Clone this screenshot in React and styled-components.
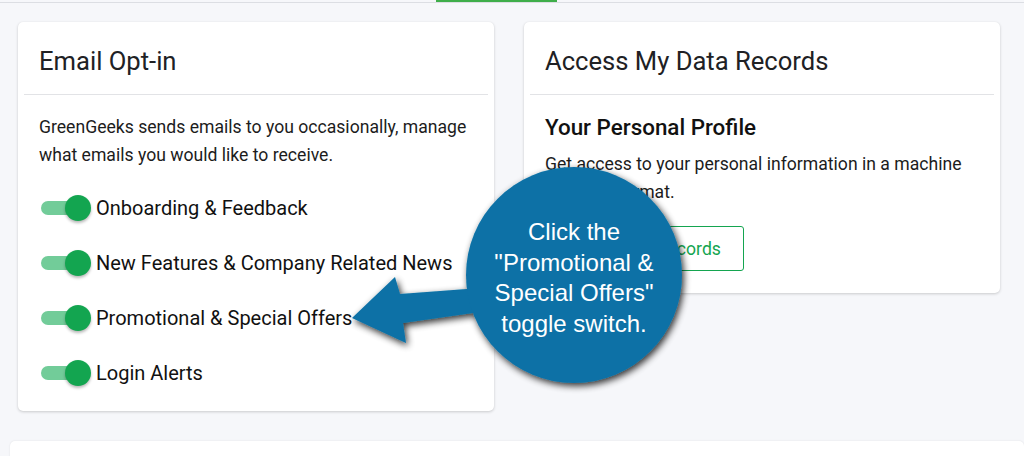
import styled, { createGlobalStyle } from "styled-components";

const GlobalStyle = createGlobalStyle`
    body {
        margin: 0;
        background: #f6f7fa;
        font-family: Roboto, "Noto Sans", sans-serif;
        color: #1c1c1c;
    }
`;

const Page = styled.div`
    position: relative;
    width: 1024px;
    height: 456px;
    overflow: hidden;
`;

const TabLine = styled.div`
    display: flex;
    height: 2px;
    border-bottom: 1px solid #dcdee3;
`;

const TabIndicator = styled.div`
    margin-left: 436px;
    width: 121px;
    height: 2px;
    background: #3fae4a;
`;

const Grid = styled.div`
    display: flex;
    align-items: flex-start;
    gap: 30px;
    padding: 19px 18px 0;
`;

const Card = styled.div`
    width: 476px;
    background: #fff;
    border-radius: 5px;
    box-shadow: 0 1px 3px rgba(0, 0, 0, 0.18), 0 0 1px rgba(0, 0, 0, 0.06);
    padding-bottom: ${(p) => p.$bottom || 0}px;
`;

const CardHeader = styled.div`
    margin: 0 6px;
    height: 73px;
    box-sizing: border-box;
    display: flex;
    align-items: center;
    padding: 6px 15px 0;
    border-bottom: 1px solid #e2e3e6;
`;

const CardTitle = styled.h2`
    margin: 0;
    font-size: 25.6px;
    font-weight: 400;
    color: #202124;
`;

const CardBody = styled.div`
    padding: 18px 21px 0;
`;

const Text = styled.p`
    margin: 0;
    font-size: 17.6px;
    line-height: 28px;
    color: #1c1c1c;
`;

const ToggleList = styled.div`
    display: flex;
    flex-direction: column;
    gap: 15px;
    margin-top: 19px;
`;

const ToggleRow = styled.label`
    display: flex;
    align-items: center;
    height: 40px;
    gap: 5px;
    font-size: 20px;
    color: #111;
`;

const Switch = styled.span`
    position: relative;
    width: 50px;
    height: 24px;
    margin-left: 2px;
    display: flex;
    align-items: center;

    &::before {
        content: "";
        width: 46px;
        height: 14px;
        border-radius: 7px;
        background: #72cc99;
    }

    &::after {
        content: "";
        position: absolute;
        right: 0;
        top: -1px;
        width: 26px;
        height: 26px;
        border-radius: 50%;
        background: #13a550;
        box-shadow: 0 2px 3px rgba(0, 0, 0, 0.28);
    }
`;

const SubTitle = styled.h3`
    margin: 0 0 9px;
    font-size: 22.4px;
    font-weight: 500;
    line-height: 28px;
    color: #111;
`;

const OutlineButton = styled.button`
    margin-top: 20px;
    height: 45px;
    padding: 0 22px 0 28px;
    border: 1px solid #14a550;
    border-radius: 3px;
    background: #fff;
    color: #14a550;
    font-family: Roboto, sans-serif;
    font-size: 17.6px;
`;

const WideCard = styled.div`
    margin: 30px 0 0 10px;
    height: 60px;
    background: #fff;
    border-radius: 5px;
    box-shadow: 0 0 2px rgba(0, 0, 0, 0.1);
`;

const Callout = styled.div`
    position: absolute;
    left: 340px;
    top: 160px;
    width: 360px;
    height: 240px;
`;

const CalloutText = styled.div`
    position: absolute;
    left: 134px;
    top: 57px;
    width: 200px;
    text-align: center;
    font-family: "Liberation Sans", Arial, sans-serif;
    font-size: 24px;
    line-height: 30.5px;
    color: #fff;
`;

const toggles = [
    "Onboarding & Feedback",
    "New Features & Company Related News",
    "Promotional & Special Offers",
    "Login Alerts",
];

function App() {
    return (
        <Page>
            <GlobalStyle />
            <TabLine>
                <TabIndicator />
            </TabLine>
            <Grid>
                <Card $bottom={18}>
                    <CardHeader>
                        <CardTitle>Email Opt-in</CardTitle>
                    </CardHeader>
                    <CardBody>
                        <Text>
                            GreenGeeks sends emails to you occasionally, manage what emails you would like to receive.
                        </Text>
                        <ToggleList>
                            {toggles.map((t) => (
                                <ToggleRow key={t}>
                                    <Switch />
                                    {t}
                                </ToggleRow>
                            ))}
                        </ToggleList>
                    </CardBody>
                </Card>
                <Card $bottom={22}>
                    <CardHeader>
                        <CardTitle>Access My Data Records</CardTitle>
                    </CardHeader>
                    <CardBody>
                        <SubTitle>Your Personal Profile</SubTitle>
                        <Text>Get access to your personal information in a machine readable format.</Text>
                        <OutlineButton>Download Records</OutlineButton>
                    </CardBody>
                </Card>
            </Grid>
            <WideCard />
            <Callout>
                <svg width="360" height="240" viewBox="0 0 360 240">
                    <defs>
                        <filter id="sh" x="-20%" y="-20%" width="140%" height="140%">
                            <feGaussianBlur in="SourceAlpha" stdDeviation="3.5" />
                            <feOffset dx="2" dy="3" result="b" />
                            <feComponentTransfer>
                                <feFuncA type="linear" slope="0.8" />
                            </feComponentTransfer>
                            <feMerge>
                                <feMergeNode />
                                <feMergeNode in="SourceGraphic" />
                            </feMerge>
                        </filter>
                    </defs>
                    <g filter="url(#sh)" fill="#0a71a6">
                        <path d="M12 158 L55 117 L60 134 L140 128 L140 152 L63 163 L66 183 Z" />
                        <circle cx="234" cy="115" r="108" />
                    </g>
                </svg>
                <CalloutText>
                    Click the "Promotional &amp; Special Offers" toggle switch.
                </CalloutText>
            </Callout>
        </Page>
    );
}

export default App;
